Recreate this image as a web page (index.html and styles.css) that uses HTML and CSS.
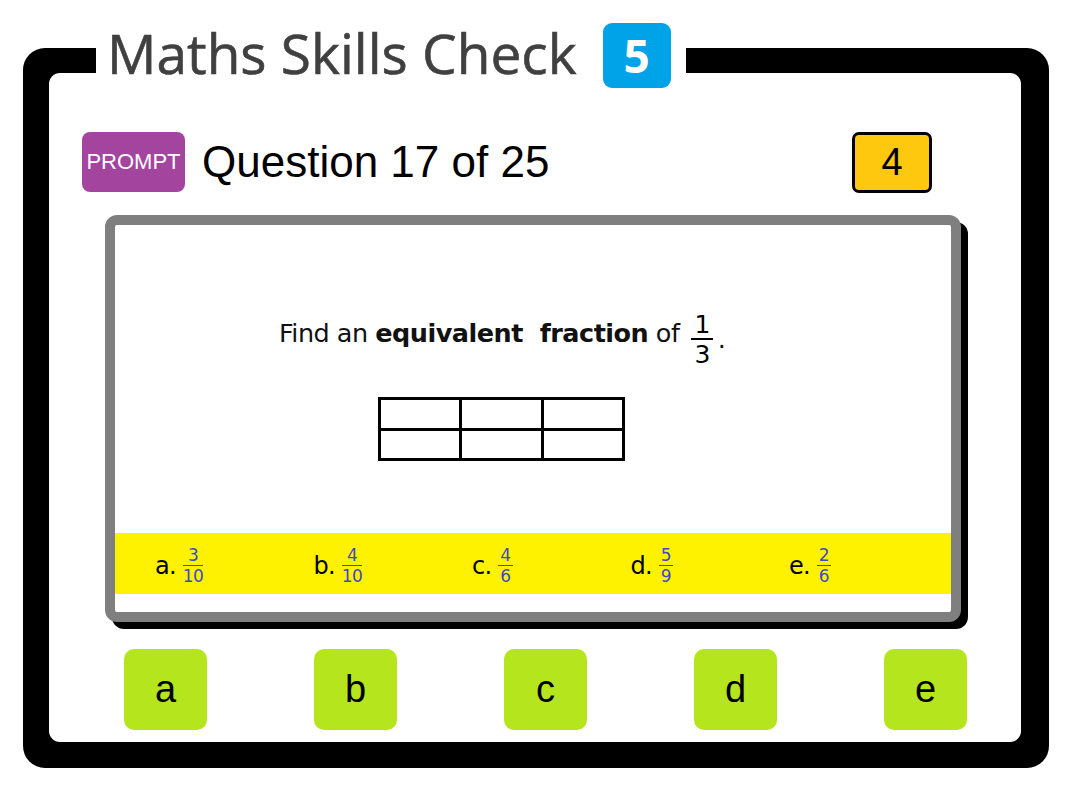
FILE: index.html
```html
<!DOCTYPE html>
<html>
<head>
<meta charset="utf-8">
<link rel="stylesheet" href="styles.css">
</head>
<body>
<div class="frame">
  <div class="title">
    <span class="title-text">Maths Skills Check</span>
    <span class="badge">5</span>
  </div>
  <div class="panel">
    <div class="head">
      <div class="prompt">PROMPT</div>
      <div class="qtext">Question 17 of 25</div>
      <div class="score">4</div>
    </div>
    <div class="card">
      <div class="sentence">
        <span class="words">Find an <b>equivalent&nbsp; fraction</b> of</span>
        <span class="frac big"><span class="num">1</span><span class="den">3</span></span>
        <span class="dot">.</span>
      </div>
      <div class="grid">
        <div class="cell"></div><div class="cell"></div><div class="cell"></div>
        <div class="cell"></div><div class="cell"></div><div class="cell"></div>
      </div>
      <div class="band">
        <div class="opt"><span class="lbl">a.</span><span class="frac small"><span class="num">3</span><span class="den">10</span></span></div>
        <div class="opt"><span class="lbl">b.</span><span class="frac small"><span class="num">4</span><span class="den">10</span></span></div>
        <div class="opt"><span class="lbl">c.</span><span class="frac small"><span class="num">4</span><span class="den">6</span></span></div>
        <div class="opt"><span class="lbl">d.</span><span class="frac small"><span class="num">5</span><span class="den">9</span></span></div>
        <div class="opt"><span class="lbl">e.</span><span class="frac small"><span class="num">2</span><span class="den">6</span></span></div>
      </div>
    </div>
    <div class="answers">
      <div class="ans">a</div>
      <div class="ans">b</div>
      <div class="ans">c</div>
      <div class="ans">d</div>
      <div class="ans">e</div>
    </div>
  </div>
</div>
</body>
</html>
```
FILE: styles.css
```css
html, body {
  margin: 0;
  padding: 0;
  background: #fff;
}
body {
  width: 1068px;
  height: 800px;
  overflow: hidden;
  font-family: "Liberation Sans", Arial, sans-serif;
}
.frame {
  position: relative;
  box-sizing: border-box;
  width: 1026px;
  height: 720px;
  margin: 48px 0 0 23px;
  padding: 25px 28px 26px 26px;
  background: #000;
  border-radius: 22px;
}
.title {
  position: absolute;
  left: 73px;
  top: -28px;
  height: 70px;
  box-sizing: border-box;
  padding: 0 15px 0 11px;
  background: #fff;
  display: flex;
  align-items: center;
}
.title-text {
  font-family: "Open Sans", sans-serif;
  font-size: 55px;
  font-weight: 400;
  letter-spacing: 0px;
  color: #404040;
  line-height: 1;
  margin-top: -5px;
  -webkit-text-stroke: 0.6px #404040;
}
.badge {
  margin-left: 26px;
  width: 68px;
  height: 65px;
  border-radius: 9px;
  background: #00a2e8;
  color: #fff;
  font-family: "Open Sans", sans-serif;
  font-weight: 700;
  font-size: 46px;
  display: flex;
  align-items: center;
  justify-content: center;
  line-height: 1;
}
.panel {
  height: 100%;
  box-sizing: border-box;
  background: #fff;
  border-radius: 11px;
  padding-top: 59px;
  display: flex;
  flex-direction: column;
}
.head {
  display: flex;
  align-items: center;
  height: 60px;
  padding: 0 89px 0 33px;
}
.prompt {
  width: 103px;
  height: 60px;
  border-radius: 8px;
  background: #a3459f;
  color: #fff;
  font-size: 22px;
  display: flex;
  align-items: center;
  justify-content: center;
}
.qtext {
  margin-left: 17px;
  font-size: 44px;
  color: #000;
  line-height: 1;
}
.score {
  margin-left: auto;
  width: 80px;
  height: 61px;
  box-sizing: border-box;
  border: 3px solid #000;
  border-radius: 7px;
  background: #fec80f;
  font-size: 38px;
  display: flex;
  align-items: center;
  justify-content: center;
  margin-top: 1px;
}
.card {
  margin: 23px 60px 0 56px;
  height: 407px;
  box-sizing: border-box;
  border: 10px solid #7f7f7f;
  border-radius: 12px;
  background: #fff;
  box-shadow: 7px 7px 0 #000;
  display: flex;
  flex-direction: column;
  font-family: "Comic Sans MS", "DejaVu Sans", sans-serif;
}
.sentence {
  margin: 89px 0 0 164px;
  height: 50px;
  display: flex;
  align-items: center;
  font-size: 25.5px;
  letter-spacing: -0.5px;
  color: #111;
}
.words {
  margin-bottom: 12px;
}
.sentence b {
  font-weight: 700;
}
.frac {
  display: inline-flex;
  flex-direction: column;
  align-items: center;
  line-height: 1;
}
.frac .num {
  border-bottom: 2px solid currentColor;
  padding: 0 2px 1px;
  align-self: stretch;
  text-align: center;
}
.frac.big {
  margin-left: 12px;
  font-size: 25px;
  color: #000;
}
.frac.big .num {
  padding: 0 3px 1px;
}
.frac.big .den {
  padding-top: 2px;
}
.dot {
  margin-left: 5px;
}
.grid {
  margin: 33px 0 0 263px;
  width: 247px;
  height: 64px;
  box-sizing: border-box;
  display: grid;
  grid-template-columns: repeat(3, 1fr);
  grid-template-rows: repeat(2, 1fr);
  gap: 3px;
  padding: 3px;
  background: #000;
}
.cell {
  background: #fff;
}
.band {
  margin-top: auto;
  margin-bottom: 18px;
  height: 61px;
  background: #fff200;
  display: flex;
  align-items: center;
  padding-left: 40px;
}
.opt {
  width: 158.5px;
  display: flex;
  align-items: center;
}
.lbl {
  font-size: 24px;
  color: #000;
  margin-top: 4px;
  letter-spacing: -0.8px;
}
.frac.small {
  margin-left: 7px;
  margin-top: 4px;
  font-size: 17px;
  letter-spacing: -0.5px;
  color: #3f48cc;
}
.frac.small .num {
  border-bottom-width: 1.5px;
}
.frac.small .den {
  padding-top: 2px;
}
.answers {
  display: flex;
  gap: 107px;
  padding-left: 75px;
  margin-top: 27px;
}
.ans {
  width: 83px;
  height: 81px;
  border-radius: 10px;
  background: #b5e61d;
  color: #000;
  font-size: 38px;
  display: flex;
  align-items: center;
  justify-content: center;
}
```
